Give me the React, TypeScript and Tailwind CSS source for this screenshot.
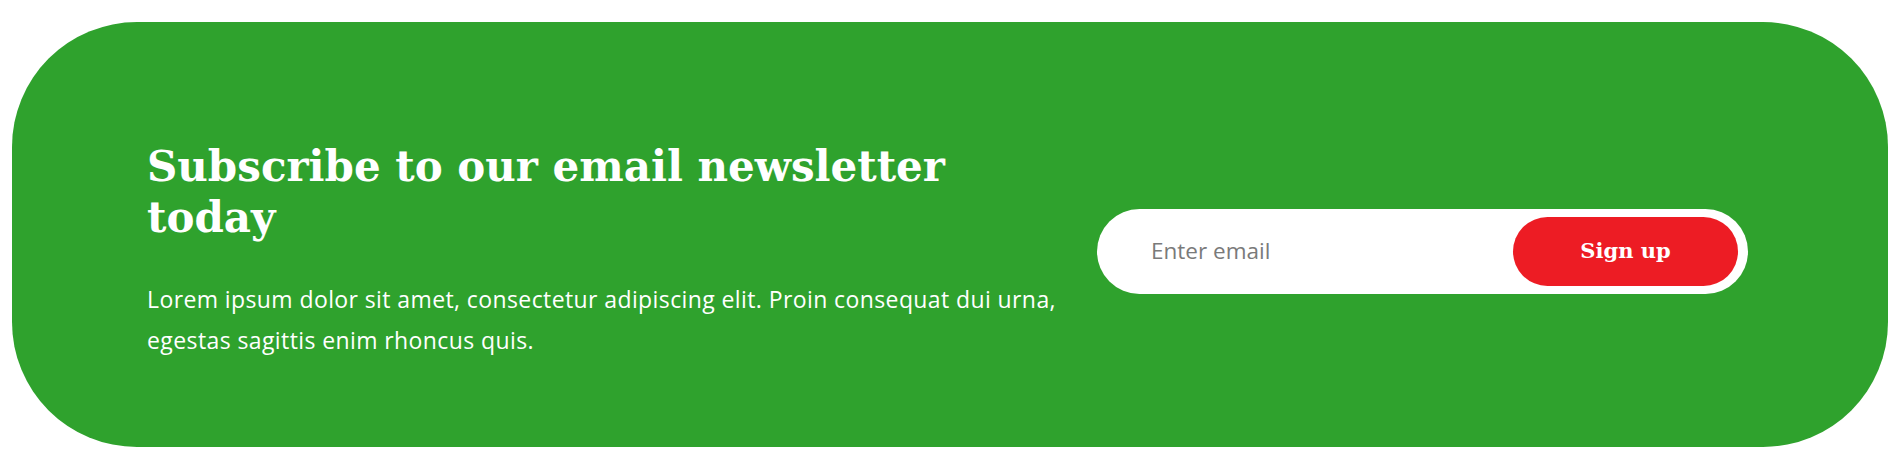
import { useState } from 'react';

export default function App() {
  const [email, setEmail] = useState('');

  return (
    <div className="w-full h-[469px] bg-white px-[12px] py-[22px]">
      {/* Newsletter banner */}
      <section className="h-full rounded-[125px] bg-[#2fa22d] flex items-center gap-[24px] pl-[135px] pr-[140px] pt-[33px]">
        <div className="flex-1 min-w-0">
          <h2 className="max-w-[820px] font-['DejaVu_Serif',serif] font-bold text-[42px] leading-[51px] text-white">
            Subscribe to our email newsletter today
          </h2>
          <p className="mt-[36px] font-['Open_Sans',sans-serif] text-[23px] tracking-[0.4px] leading-[41px] text-white">
            Lorem ipsum dolor sit amet, consectetur adipiscing elit. Proin consequat dui urna, egestas sagittis enim rhoncus quis.
          </p>
        </div>

        {/* Signup form */}
        <form
          className="w-[651px] h-[85px] shrink-0 rounded-full bg-white flex items-center pl-[54px] pr-[10px]"
          onSubmit={(e) => e.preventDefault()}
        >
          <input
            type="email"
            value={email}
            onChange={(e) => setEmail(e.target.value)}
            placeholder="Enter email"
            className="flex-1 min-w-0 bg-transparent outline-none font-['Open_Sans',sans-serif] text-[22.5px] text-[#333] placeholder:text-[#7a7a7a]"
          />
          <button
            type="submit"
            className="w-[225px] h-[69px] shrink-0 rounded-full bg-[#ed1c24] text-white font-['DejaVu_Serif',serif] font-bold text-[21px]"
          >
            Sign up
          </button>
        </form>
      </section>
    </div>
  );
}
